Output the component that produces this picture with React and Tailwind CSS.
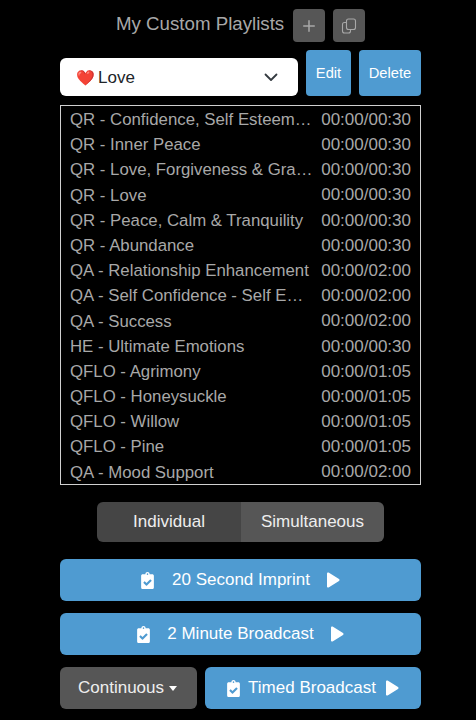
import React from "react";

const F = { fontFamily: '"Liberation Sans", Arial, sans-serif' };
const rows = [
  ["QR - Confidence, Self Esteem & Self Worth", "00:00/00:30"],
  ["QR - Inner Peace", "00:00/00:30"],
  ["QR - Love, Forgiveness & Gratitude", "00:00/00:30"],
  ["QR - Love", "00:00/00:30"],
  ["QR - Peace, Calm & Tranquility", "00:00/00:30"],
  ["QR - Abundance", "00:00/00:30"],
  ["QA - Relationship Enhancement", "00:00/02:00"],
  ["QA - Self Confidence - Self E…", "00:00/02:00"],
  ["QA - Success", "00:00/02:00"],
  ["HE - Ultimate Emotions", "00:00/00:30"],
  ["QFLO - Agrimony", "00:00/01:05"],
  ["QFLO - Honeysuckle", "00:00/01:05"],
  ["QFLO - Willow", "00:00/01:05"],
  ["QFLO - Pine", "00:00/01:05"],
  ["QA - Mood Support", "00:00/02:00"],
];

function Clip({ cls }) {
  return (
    <svg viewBox="0 0 384 512" className={cls} fill="currentColor">
      <path d="M336 64h-80c0-35.300-28.700-64-64-64s-64 28.700-64 64H48C21.500 64 0 85.500 0 112v352c0 26.500 21.500 48 48 48h288c26.500 0 48-21.500 48-48V112c0-26.500-21.500-48-48-48zM192 40c13.300 0 24 10.700 24 24s-10.700 24-24 24-24-10.700-24-24 10.700-24 24-24zm121.200 231.800l-143 141.800c-4.700 4.700-12.300 4.600-17-.1l-82.600-83.300c-4.700-4.700-4.600-12.300.1-17L99.100 285c4.700-4.700 12.300-4.600 17 .1l46 46.400 106-105.200c4.700-4.700 12.300-4.600 17 .1l28.200 28.400c4.700 4.800 4.600 12.300-.1 17z" />
    </svg>
  );
}
function Play({ cls }) {
  return (
    <svg viewBox="0 0 14 16" className={cls} fill="currentColor">
      <path d="M1 1.600C1 .7 1.900.2 2.600.6l10.400 6.400c.7.400.7 1.500 0 1.900L2.600 15.400C1.900 15.800 1 15.300 1 14.400z" />
    </svg>
  );
}

export default function App() {
  return (
    <div className="w-[476px] h-[720px] overflow-hidden bg-black flex flex-col pl-[60px]" style={F}>
      <div className="w-[361px] flex items-center h-[33px] mt-[9px] pl-[56px] text-[#a8a8a8]">
        <span className="text-[18.700px] leading-none pb-[3px] whitespace-nowrap">My Custom Playlists</span>
        <button className="ml-[9px] w-[32px] h-[33px] rounded-[4px] bg-[#565656] flex items-center justify-center shrink-0">
          <svg viewBox="0 0 16 16" className="w-[14px] h-[14px]" stroke="#a8a8a8" strokeWidth="1.700" fill="none" strokeLinecap="round"><path d="M8 2v12M2 8h12" /></svg>
        </button>
        <button className="ml-[8px] w-[32px] h-[33px] rounded-[4px] bg-[#565656] flex items-center justify-center shrink-0">
          <svg viewBox="0 0 16 16" className="w-[16px] h-[16px]" stroke="#a8a8a8" strokeWidth="1.100" fill="none"><rect x="5.500" y="1" width="9" height="10.500" rx="2" /><path d="M5 4.500H3.500a2 2 0 0 0-2 2V13a2 2 0 0 0 2 2h4a2 2 0 0 0 2-2v-1" /></svg>
        </button>
      </div>
      <div className="w-[361px] flex items-end mt-[8px] gap-[8px]">
        <div className="w-[238px] h-[38px] rounded-[6px] bg-white flex items-center pl-[16px] pr-[20px] text-[17px] text-[#212529]">
          <span className="flex-1 flex items-center pt-[1px]"><span className="text-[15px] leading-none mr-[3px]">❤️</span>Love</span>
          <svg viewBox="0 0 14 14" className="w-[14px] h-[14px]" stroke="#343a40" strokeWidth="1.800" fill="none" strokeLinecap="round" strokeLinejoin="round"><path d="M1.500 4.500L7 10l5.500-5.500" /></svg>
        </div>
        <button className="w-[45px] h-[46px] rounded-[4px] bg-[#4f9bd1] text-white text-[14.700px] pt-[1px]">Edit</button>
        <button className="w-[62px] h-[46px] rounded-[4px] bg-[#4f9bd1] text-white text-[14.700px] pt-[1px]">Delete</button>
      </div>
      <div className="w-[361px] h-[380px] mt-[9px] border border-[#d0d0d0] pl-[9px] pr-[9px] pt-[1px] text-[#a8a8a8] text-[17px]">
        {rows.map(([t, d]) => (
          <div key={t} className="flex h-[25.200px] items-center">
            <span className="truncate flex-1 min-w-0 text-[16.800px]">{t}</span>
            <span className="ml-[8px] shrink-0">{d}</span>
          </div>
        ))}
      </div>
      <div className="w-[287px] h-[40px] ml-[37px] mt-[17px] flex rounded-[6px] overflow-hidden text-[17px] text-[#eeeeee]">
        <div className="w-[144px] bg-[#454545] flex items-center justify-center">Individual</div>
        <div className="flex-1 bg-[#565656] flex items-center justify-center">Simultaneous</div>
      </div>
      <button className="w-[361px] h-[42px] mt-[17px] rounded-[6px] bg-[#4f9bd1] text-white text-[17px] flex items-center justify-center">
        <Clip cls="w-[13px] h-[17px]" /><span className="ml-[18px]">20 Second Imprint</span><Play cls="w-[14px] h-[16px] ml-[16px]" />
      </button>
      <button className="w-[361px] h-[42px] mt-[12px] rounded-[6px] bg-[#4f9bd1] text-white text-[17px] flex items-center justify-center">
        <Clip cls="w-[13px] h-[17px]" /><span className="ml-[17px]">2 Minute Broadcast</span><Play cls="w-[14px] h-[16px] ml-[16px]" />
      </button>
      <div className="w-[361px] flex gap-[8px] mt-[12px]">
        <button className="w-[137px] h-[42px] rounded-[6px] bg-[#565656] text-[#eeeeee] text-[17px] flex items-center justify-center pr-[2px]">
          Continuous<span className="ml-[5px] border-x-[4.500px] border-x-transparent border-t-[5px] border-t-white" />
        </button>
        <button className="flex-1 h-[42px] rounded-[6px] bg-[#4f9bd1] text-white text-[17px] flex items-center justify-center">
          <Clip cls="w-[13px] h-[17px]" /><span className="ml-[8px] mr-[1px]">Timed Broadcast</span><Play cls="w-[14px] h-[16px] ml-[8px]" />
        </button>
      </div>
    </div>
  );
}
